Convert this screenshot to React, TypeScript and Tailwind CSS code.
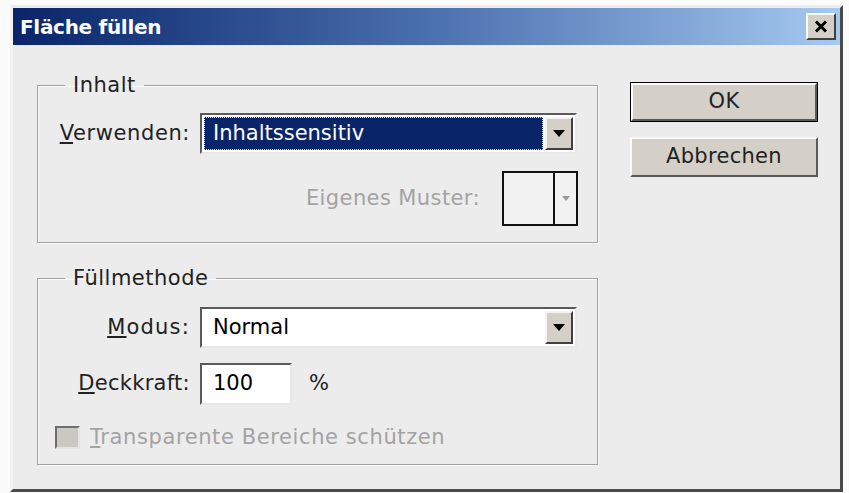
import React from "react";

const font = { fontFamily: '"DejaVu Sans", Tahoma, sans-serif' };

function ArrowButton({ disabled = false }: { disabled?: boolean }) {
  return (
    <div className="flex h-full w-[28px] items-center justify-center border-2 border-t-[#f4f4f0] border-l-[#f4f4f0] border-r-[#404040] border-b-[#404040] bg-[#d4d0c8]">
      <svg width="12" height="7" viewBox="0 0 12 7">
        <path d="M0 0 H12 L6 7 Z" fill={disabled ? "#9a9a9a" : "#000"} />
      </svg>
    </div>
  );
}

function Dropdown({ value, selected = false }: { value: string; selected?: boolean }) {
  return (
    <div className="flex h-[41px] w-[377px] items-stretch border-2 border-t-[#5a5a5a] border-l-[#5a5a5a] border-r-[#e8e8e8] border-b-[#e8e8e8] bg-white p-[2px]">
      <div className="flex flex-1 items-center pr-[2px]">
        {selected ? (
          <div className="flex h-full w-full items-center border border-dotted border-[#f3e7a8] bg-[#0a246a] pl-[8px] text-white">
            {value}
          </div>
        ) : (
          <div className="pl-[9px] text-black">{value}</div>
        )}
      </div>
      <ArrowButton />
    </div>
  );
}

function GroupBox({
  title,
  children,
  className = "",
}: {
  title: string;
  children: React.ReactNode;
  className?: string;
}) {
  return (
    <fieldset
      className={`w-[561px] border border-[#a2a2a2] shadow-[inset_1px_1px_0_#fbfbfb,1px_1px_0_#fbfbfb] ${className}`}
    >
      <legend className="ml-[27px] h-[24px] px-[8px] leading-[24px] tracking-[0.5px] text-[#222]">
        {title}
      </legend>
      {children}
    </fieldset>
  );
}

function Button({ label, isDefault = false }: { label: string; isDefault?: boolean }) {
  return (
    <div className={`h-[40px] w-[188px] ${isDefault ? "border border-black" : ""} bg-[#d4d0c8]`}>
      <div className="flex h-full w-full items-center justify-center border-2 border-t-[#fafafa] border-l-[#fafafa] border-r-[#5a5a5a] border-b-[#5a5a5a] tracking-[0.3px] text-[#222]">
        {label}
      </div>
    </div>
  );
}

export default function App() {
  return (
    <div className="h-[493px] w-[849px] bg-[#fbfbfb] pl-[10px] pt-[5px] text-[21px]" style={font}>
      <div className="flex h-[487px] w-[833px] flex-col border-[3px] border-t-[#ececec] border-l-[#f2f2f2] border-r-[#4a4a4a] border-b-[#4a4a4a] bg-[#ececec]">
        {/* title bar */}
        <div className="flex h-[37px] items-center justify-between bg-gradient-to-r from-[#0a246a] via-[#4a6fae] to-[#a6caf0] pl-[7px] pr-[4px]">
          <span className="text-[20px] font-bold tracking-[-0.3px] text-white">Fläche füllen</span>
          <div className="flex h-[27px] w-[30px] items-center justify-center border-2 border-t-[#fafafa] border-l-[#fafafa] border-r-[#404040] border-b-[#404040] bg-[#d4d0c8]">
            <svg width="14" height="13" viewBox="0 0 14 13">
              <path d="M2 1.5 L12 11.5 M12 1.5 L2 11.5" stroke="#000" strokeWidth="3" />
            </svg>
          </div>
        </div>

        {/* body */}
        <div className="flex flex-1 items-start pl-[24px]">
          <div className="flex flex-col gap-[23px] pt-[28px]">
            <GroupBox title="Inhalt" className="h-[170px]">
              <div className="flex flex-col pt-[16px]">
                <div className="flex items-center">
                  <div className="w-[152px] text-right tracking-[0.6px] text-[#222]">
                    <span className="underline">V</span>erwenden:
                  </div>
                  <div className="ml-[10px]">
                    <Dropdown value="Inhaltssensitiv" selected />
                  </div>
                </div>
                <div className="mt-[17px] flex items-center justify-end pr-[19px]">
                  <span className="mr-[22px] tracking-[0.4px] text-[#a3a3a3]">Eigenes Muster:</span>
                  <div className="flex h-[55px] w-[76px] border-2 border-[#111] bg-[#f2f2f2]">
                    <div className="w-[51px] border-r-2 border-[#111]" />
                    <div className="flex flex-1 items-center justify-center">
                      <svg width="8" height="5" viewBox="0 0 8 5">
                        <path d="M0 0 H8 L4 5 Z" fill="#9a9a9a" />
                      </svg>
                    </div>
                  </div>
                </div>
              </div>
            </GroupBox>

            <GroupBox title="Füllmethode" className="h-[199px]">
              <div className="flex flex-col pt-[17px]">
                <div className="flex items-center">
                  <div className="w-[152px] text-right tracking-[1.2px] text-[#222]">
                    <span className="underline">M</span>odus:
                  </div>
                  <div className="ml-[10px]">
                    <Dropdown value="Normal" />
                  </div>
                </div>
                <div className="mt-[15px] flex items-center">
                  <div className="w-[152px] text-right tracking-[0.3px] text-[#222]">
                    <span className="underline">D</span>eckkraft:
                  </div>
                  <div className="ml-[10px] flex h-[42px] w-[92px] items-center border-2 border-t-[#5a5a5a] border-l-[#5a5a5a] border-r-[#e8e8e8] border-b-[#e8e8e8] bg-white pl-[11px] text-black">
                    100
                  </div>
                  <span className="ml-[17px] text-[#222]">%</span>
                </div>
                <div className="mt-[17px] flex items-center pl-[17px]">
                  <div className="h-[23px] w-[25px] border-2 border-t-[#6e6e6e] border-l-[#6e6e6e] border-r-[#e4e4e4] border-b-[#e4e4e4] bg-[#c9c8c2]" />
                  <span className="ml-[10px] tracking-[0.6px] text-[#a3a3a3]">
                    <span className="underline">T</span>ransparente Bereiche schützen
                  </span>
                </div>
              </div>
            </GroupBox>
          </div>

          <div className="ml-[32px] flex flex-col gap-[15px] pt-[37px]">
            <Button label="OK" isDefault />
            <Button label="Abbrechen" />
          </div>
        </div>
      </div>
    </div>
  );
}
